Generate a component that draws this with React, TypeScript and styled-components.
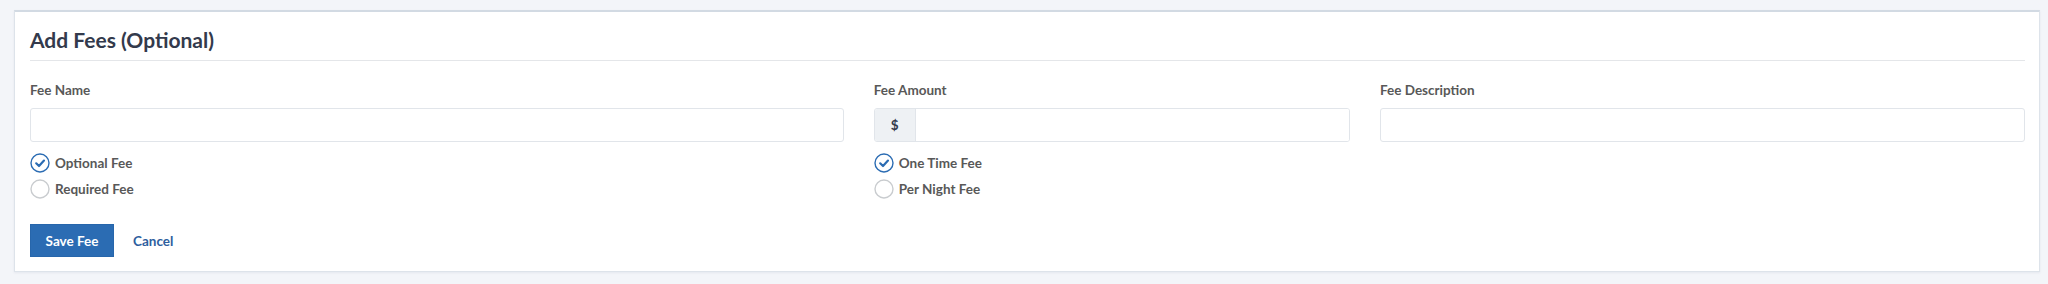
import styled, { createGlobalStyle } from "styled-components";

const GlobalStyle = createGlobalStyle`
  html, body {
    margin: 0;
    padding: 0;
    background: #f3f5f9;
    font-family: Lato, "Open Sans", sans-serif;
  }
`;

const Page = styled.div`
  padding: 10px 8px 11px 14px;
`;

const Card = styled.section`
  background: #ffffff;
  border: 1px solid #dde3ea;
  border-top: 2px solid #d2dae3;
  box-shadow: 0 1px 2px rgba(60, 80, 110, 0.08);
  padding: 15px 14px 14px 15px;
`;

const Heading = styled.h2`
  margin: 0;
  padding-bottom: 7px;
  border-bottom: 1px solid #e4e6e9;
  font-size: 21px;
  line-height: 26px;
  font-weight: 700;
  color: #333a4c;
`;

const Row = styled.div`
  display: flex;
  margin: 20px -15px 0;
`;

const Col = styled.div<{ $span: number }>`
  flex: 0 0 ${(p) => (p.$span / 12) * 100}%;
  box-sizing: border-box;
  padding: 0 15px;
`;

const Label = styled.label`
  display: block;
  font-size: 13.5px;
  line-height: 18px;
  font-weight: 700;
  color: #585858;
  margin-bottom: 9px;
`;

const TextInput = styled.input`
  display: block;
  width: 100%;
  box-sizing: border-box;
  height: 34px;
  border: 1px solid #e1e5ea;
  border-radius: 3px;
  background: #fff;
  outline: none;
  font: inherit;
`;

const InputGroup = styled.div`
  display: flex;
  height: 34px;
  border: 1px solid #e1e5ea;
  border-radius: 3px;
  box-sizing: border-box;
  overflow: hidden;
`;

const Addon = styled.span`
  flex: 0 0 40px;
  display: flex;
  align-items: center;
  justify-content: center;
  background: #eef1f4;
  border-right: 1px solid #e1e5ea;
  font-size: 13.5px;
  font-weight: 700;
  color: #333a4c;
`;

const GroupInput = styled.input`
  flex: 1;
  border: none;
  outline: none;
  font: inherit;
`;

const RadioList = styled.div`
  display: flex;
  flex-direction: column;
  gap: 6px;
  margin-top: 11px;
`;

const RadioRow = styled.div`
  display: flex;
  align-items: center;
  gap: 5px;
  height: 20px;
  font-size: 13.5px;
  font-weight: 700;
  color: #585858;
`;

const Actions = styled.div`
  display: flex;
  align-items: center;
  gap: 19px;
  margin-top: 25px;
`;

const SaveButton = styled.button`
  width: 84px;
  height: 33px;
  border: 1px solid #2766ab;
  background: #2b6cb3;
  color: #ffffff;
  font: inherit;
  font-size: 13.5px;
  font-weight: 700;
  padding: 0;
`;

const CancelLink = styled.a`
  font-size: 13.5px;
  font-weight: 700;
  color: #2d5e9e;
  text-decoration: none;
`;

const RadioIcon = ({ checked }: { checked: boolean }) => (
  <svg width="20" height="20" viewBox="0 0 20 20">
    <circle
      cx="10"
      cy="10"
      r="9"
      fill="#fff"
      stroke={checked ? "#2b6cb3" : "#c9cccf"}
      strokeWidth="1.4"
    />
    {checked && (
      <polyline
        points="6.2,10.3 9,13 14,7.6"
        fill="none"
        stroke="#2b6cb3"
        strokeWidth="2.2"
        strokeLinecap="round"
        strokeLinejoin="round"
      />
    )}
  </svg>
);

const Radio = ({ label, checked = false }: { label: string; checked?: boolean }) => (
  <RadioRow>
    <RadioIcon checked={checked} />
    {label}
  </RadioRow>
);

export default function App() {
  return (
    <>
      <GlobalStyle />
      <Page>
        <Card>
          <Heading>Add Fees (Optional)</Heading>
          <Row>
            <Col $span={5}>
              <Label>Fee Name</Label>
              <TextInput />
              <RadioList>
                <Radio label="Optional Fee" checked />
                <Radio label="Required Fee" />
              </RadioList>
            </Col>
            <Col $span={3}>
              <Label>Fee Amount</Label>
              <InputGroup>
                <Addon>$</Addon>
                <GroupInput />
              </InputGroup>
              <RadioList>
                <Radio label="One Time Fee" checked />
                <Radio label="Per Night Fee" />
              </RadioList>
            </Col>
            <Col $span={4}>
              <Label>Fee Description</Label>
              <TextInput />
            </Col>
          </Row>
          <Actions>
            <SaveButton>Save Fee</SaveButton>
            <CancelLink href="#">Cancel</CancelLink>
          </Actions>
        </Card>
      </Page>
    </>
  );
}
